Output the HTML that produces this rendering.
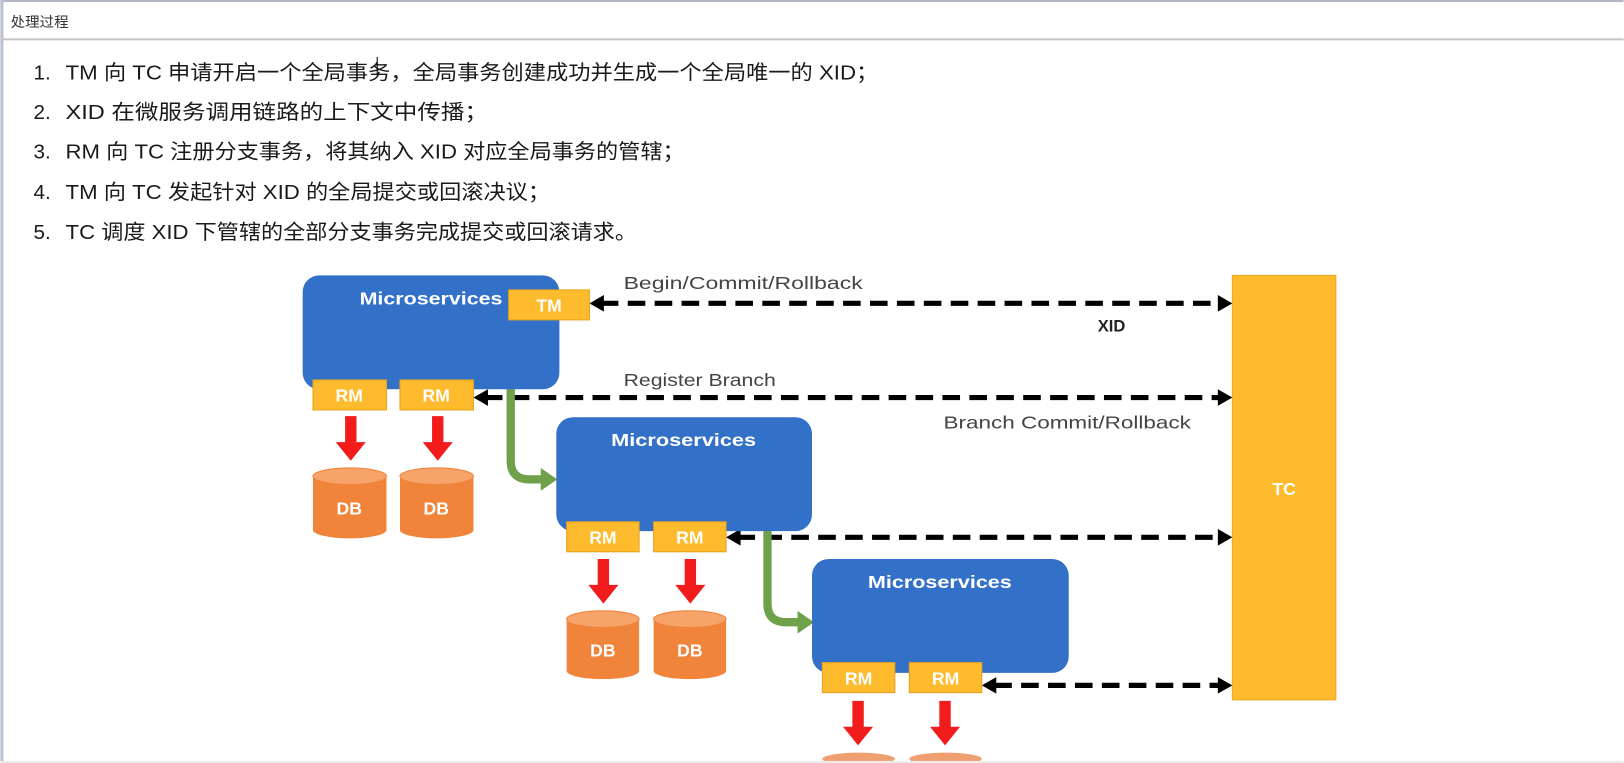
<!DOCTYPE html>
<html><head><meta charset="utf-8"><style>
html,body{margin:0;padding:0;background:#fff;overflow:hidden}
svg{display:block}
.cn{font-family:"Liberation Sans","Noto Sans CJK SC",sans-serif}
</style></head><body>
<svg width="1624" height="763" viewBox="0 0 1568 737" xmlns="http://www.w3.org/2000/svg">
<rect x="0" y="0" width="1568" height="737" fill="#fff"/>
<rect x="0" y="0" width="1568" height="2" fill="#b4b8c4"/>
<rect x="0" y="0" width="3" height="737" fill="#bcc3cf"/>
<rect x="0" y="37" width="1568" height="2" fill="#c6c6c6"/>
<text x="10" y="26" class="cn" font-size="14" fill="#333">处理过程</text>
<g class="cn" font-size="20" fill="#1a1a1a">
<text x="32" y="77">1.</text><text x="63" y="77" textLength="785" lengthAdjust="spacingAndGlyphs">TM 向 TC 申请开启一个全局事务，全局事务创建成功并生成一个全局唯一的 XID；</text>
<text x="32" y="115">2.</text><text x="63" y="115" textLength="408" lengthAdjust="spacingAndGlyphs">XID 在微服务调用链路的上下文中传播；</text>
<text x="32" y="153">3.</text><text x="63" y="153" textLength="598" lengthAdjust="spacingAndGlyphs">RM 向 TC 注册分支事务，将其纳入 XID 对应全局事务的管辖；</text>
<text x="32" y="192">4.</text><text x="63" y="192" textLength="468" lengthAdjust="spacingAndGlyphs">TM 向 TC 发起针对 XID 的全局提交或回滚决议；</text>
<text x="32" y="231">5.</text><text x="63" y="231" textLength="552" lengthAdjust="spacingAndGlyphs">TC 调度 XID 下管辖的全部分支事务完成提交或回滚请求。</text>
</g>
<line x1="364" y1="55" x2="364" y2="72" stroke="#000" stroke-width="1"/>
<rect x="1190" y="266" width="100" height="410" fill="#fdbb2d" stroke="#f0a820"/>
<text x="1240" y="478" text-anchor="middle" font-family="Liberation Sans" font-weight="bold" font-size="17" fill="#fff">TC</text>
<g stroke="#000" stroke-width="5" stroke-dasharray="17,9" fill="none">
<line x1="580" y1="293" x2="1178" y2="293"/>
<line x1="468" y1="384" x2="1178" y2="384"/>
<line x1="712" y1="519" x2="1178" y2="519"/>
<line x1="960" y1="662" x2="1178" y2="662"/>
</g>
<g fill="#000">
<path d="M569,293 l14,-8 v16z"/><path d="M1190,293 l-14,-8 v16z"/>
<path d="M457,384 l14,-8 v16z"/><path d="M1190,384 l-14,-8 v16z"/>
<path d="M701,519 l14,-8 v16z"/><path d="M1190,519 l-14,-8 v16z"/>
<path d="M948,662 l14,-8 v16z"/><path d="M1190,662 l-14,-8 v16z"/>
</g>
<g font-family="Liberation Sans" font-size="17" fill="#444">
<text x="602" y="279" textLength="231" lengthAdjust="spacingAndGlyphs">Begin/Commit/Rollback</text>
<text x="602" y="373" textLength="147" lengthAdjust="spacingAndGlyphs">Register Branch</text>
<text x="911" y="414" textLength="239" lengthAdjust="spacingAndGlyphs">Branch Commit/Rollback</text>
</g>
<text x="1060" y="320" font-family="Liberation Sans" font-weight="bold" font-size="16" fill="#222">XID</text>
<g fill="none" stroke="#6fa14a" stroke-width="8">
<path d="M493,372 V445 Q493,463 511,463 H524"/>
<path d="M741,505 V583 Q741,601 759,601 H772"/>
</g>
<path d="M522,452 L538,463 L522,474 Z" fill="#6fa14a"/>
<path d="M770,590 L786,601 L770,612 Z" fill="#6fa14a"/>
<g fill="#3371c8">
<rect x="292" y="266" width="248" height="110" rx="16"/>
<rect x="537" y="403" width="247" height="110" rx="16"/>
<rect x="784" y="540" width="248" height="110" rx="16"/>
</g>
<g font-family="Liberation Sans" font-weight="bold" font-size="17" fill="#fff">
<text x="347" y="294" textLength="138" lengthAdjust="spacingAndGlyphs">Microservices</text>
<text x="590" y="431" textLength="140" lengthAdjust="spacingAndGlyphs">Microservices</text>
<text x="838" y="568" textLength="139" lengthAdjust="spacingAndGlyphs">Microservices</text>
</g>
<g fill="#fdbb2d" stroke="#e8a21c" stroke-width="1">
<rect x="491" y="280" width="78" height="29"/>
<rect x="302" y="367" width="71" height="29"/><rect x="386" y="367" width="71" height="29"/>
<rect x="547" y="504" width="70" height="29"/><rect x="631" y="504" width="70" height="29"/>
<rect x="794" y="640" width="70" height="29"/><rect x="878" y="640" width="70" height="29"/>
</g>
<g font-family="Liberation Sans" font-weight="bold" font-size="17" fill="#fff" text-anchor="middle">
<text x="530" y="301">TM</text>
<text x="337" y="388">RM</text><text x="421" y="388">RM</text>
<text x="582" y="525">RM</text><text x="666" y="525">RM</text>
<text x="829" y="661">RM</text><text x="913" y="661">RM</text>
</g>
<g fill="#f21c1c">
<path d="M333,402 h11 v25 h9 l-14.5,18 l-14.5,-18 h9z"/>
<path d="M417,402 h11 v25 h9 l-14.5,18 l-14.5,-18 h9z"/>
<path d="M577,540 h11 v25 h9 l-14.5,18 l-14.5,-18 h9z"/>
<path d="M661,540 h11 v25 h9 l-14.5,18 l-14.5,-18 h9z"/>
<path d="M823,677 h11 v25 h9 l-14.5,18 l-14.5,-18 h9z"/>
<path d="M907,677 h11 v25 h9 l-14.5,18 l-14.5,-18 h9z"/>
</g>
<g>
<path d="M302,460 v52 a35.5,8 0 0 0 71,0 v-52z" fill="#f0843a"/><ellipse cx="337.5" cy="460" rx="35.5" ry="8" fill="#f7a46b" stroke="#f0843a"/>
<path d="M386,460 v52 a35.5,8 0 0 0 71,0 v-52z" fill="#f0843a"/><ellipse cx="421.5" cy="460" rx="35.5" ry="8" fill="#f7a46b" stroke="#f0843a"/>
<path d="M547,598 v50 a35,8 0 0 0 70,0 v-50z" fill="#f0843a"/><ellipse cx="582" cy="598" rx="35" ry="8" fill="#f7a46b" stroke="#f0843a"/>
<path d="M631,598 v50 a35,8 0 0 0 70,0 v-50z" fill="#f0843a"/><ellipse cx="666" cy="598" rx="35" ry="8" fill="#f7a46b" stroke="#f0843a"/>
<ellipse cx="829" cy="733" rx="35" ry="6" fill="#f0a070"/>
<ellipse cx="913" cy="733" rx="35" ry="6" fill="#f0a070"/>
</g>
<g font-family="Liberation Sans" font-weight="bold" font-size="17" fill="#fff" text-anchor="middle">
<text x="337" y="497">DB</text><text x="421" y="497">DB</text>
<text x="582" y="634">DB</text><text x="666" y="634">DB</text>
</g>
<rect x="0" y="735" width="1568" height="2" fill="#ececec"/>
</svg>
</body></html>
